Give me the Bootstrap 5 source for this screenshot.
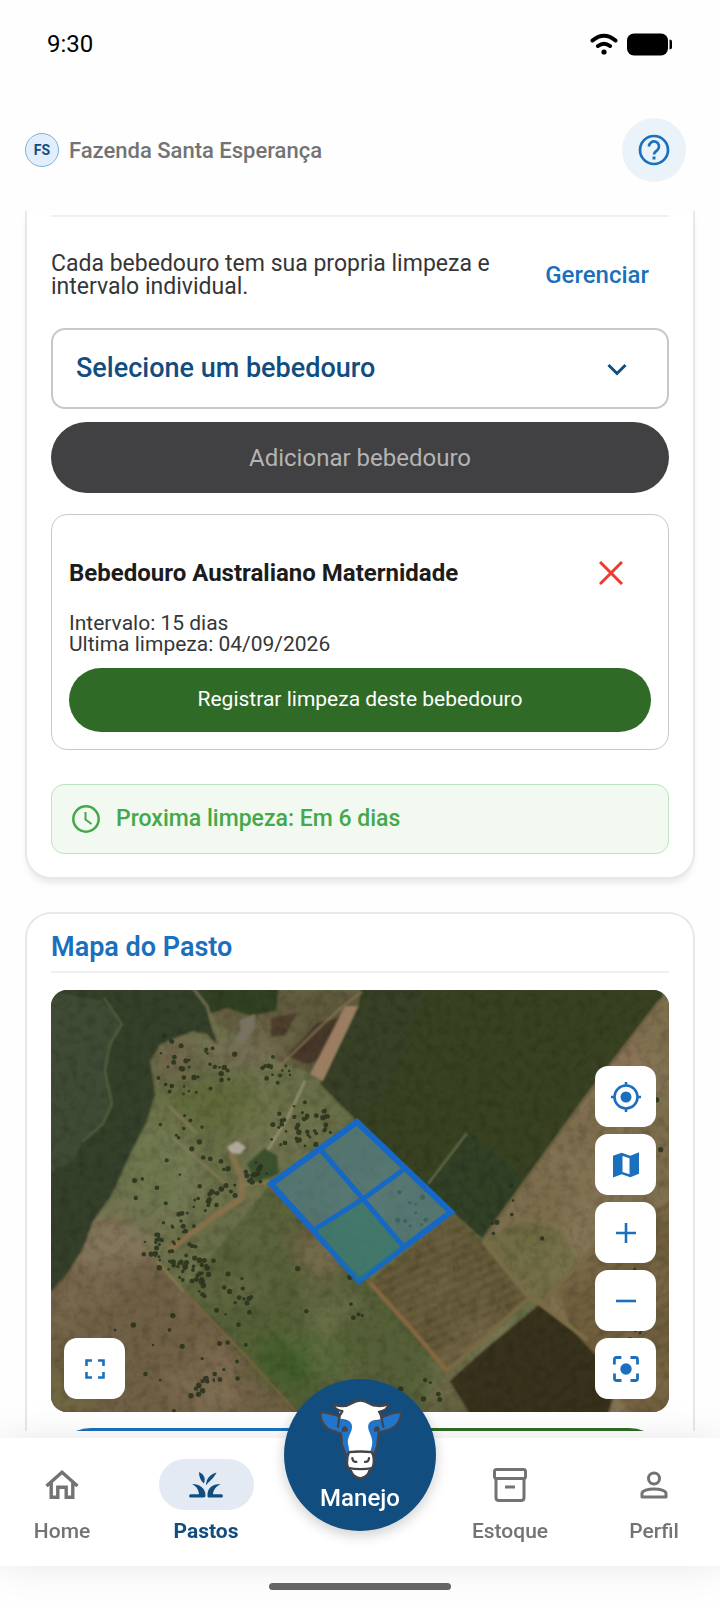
<!DOCTYPE html>
<html lang="pt-BR">
<head>
  <meta charset="UTF-8">
  <meta name="viewport" content="width=device-width, initial-scale=1.0">
  <link rel="stylesheet" href="https://cdn.jsdelivr.net/npm/bootstrap@5.3.6/dist/css/bootstrap.min.css">
  <script src="https://cdn.jsdelivr.net/npm/bootstrap@5.3.6/dist/js/bootstrap.bundle.min.js"></script>

  <title>Pastos</title>
  <style>
    :root {
      --azul: #1b70bd;
      --azul-escuro: #124d80;
      --cinza: #737373;
    }
    body {
      font-family: Roboto, "Liberation Sans", sans-serif;
      color: #363636;
      background: #fefefe;
    }
    svg { display: block; }
    .fs-21 { font-size: 21px; }
    .fs-22 { font-size: 22px; }
    .fs-23 { font-size: 23px; }
    .fs-24 { font-size: 24px; }
    .fs-27 { font-size: 27px; }
    .fw-medio { font-weight: 500; }
    .cor-azul { color: var(--azul); }

    .barra-status {
      height: 88px;
      padding: 0 47px;
      color: #000;
    }
    .topo {
      height: 123px;
      padding: 1px 34px 0 25px;
    }
    .avatar {
      width: 34px;
      height: 34px;
      border: 1px solid #7fb0dc;
      background: #e2eefb;
      color: var(--azul-escuro);
      font-size: 14px;
    }
    .btn-ajuda {
      width: 64px;
      height: 64px;
      background: #ebf3fa;
    }

    .painel {
      background: #fff;
      border: 2px solid #e8e8e8;
      border-radius: 26px;
      padding: 0 24px 23px;
    }
    .painel-rolado {
      border-top: 0;
      border-radius: 0 0 26px 26px;
      padding-top: 4px;
      box-shadow: 0 6px 8px -3px rgba(0, 0, 0, .11);
    }
    .divisor {
      margin: 0;
      border-top: 2px solid #f0f0f0;
      opacity: 1;
    }
    .aviso {
      padding: 32px 0 27px;
      line-height: 23px;
    }
    .aviso .btn { padding: 8px 20px; }

    .seletor {
      height: 81px;
      padding: 0 60px 0 23px;
      border: 2px solid #c8c8c8;
      border-radius: 14px;
      color: var(--azul-escuro);
      background-color: #fff;
      background-image: url("data:image/svg+xml,%3Csvg xmlns='http://www.w3.org/2000/svg' viewBox='0 0 20 20'%3E%3Cpath d='M1.500 6l8.500 8.500L18.500 6' fill='none' stroke='%23124d80' stroke-width='3'/%3E%3C/svg%3E");
      background-size: 20px 20px;
      background-position: right 40px center;
    }
    .btn-adicionar, .btn-adicionar:disabled {
      height: 71px;
      margin: 13px 0 21px;
      background: #414042;
      color: #b4b4b4;
      border: 0;
      opacity: 1;
    }
    .bebedouro {
      border: 1px solid #c8c8c8;
      border-radius: 16px;
      padding: 17px;
    }
    .bebedouro h3 { line-height: 28px; color: #1c1c1c; }
    .bebedouro-topo { height: 81px; }
    .bebedouro-topo .btn { padding: 14px 28px; }
    .bebedouro-dados { line-height: 21px; margin: 0 0 13px; }
    .btn-verde {
      height: 64px;
      background: #2f6b26;
      color: #fff;
    }
    .proxima {
      height: 70px;
      margin-top: 34px;
      padding: 0 20px;
      gap: 16px;
      border: 1px solid #bfe3c1;
      border-radius: 13px;
      background: #f1f9f1;
      color: #45a84a;
    }

    .painel-mapa { margin-top: 33px; }
    .painel-mapa h2 { line-height: 36px; margin: 0; padding: 15px 0 6px; font-weight: 600; }
    .mapa {
      position: relative;
      height: 422px;
      margin: 17px 0 16px;
      border-radius: 16px;
      overflow: hidden;
    }
    .mapa > svg { width: 100%; height: 100%; }
    .controles {
      position: absolute;
      right: 13px;
      bottom: 13px;
      gap: 7px;
    }
    .controle-esq { right: auto; left: 13px; }
    .controles .btn {
      width: 61px;
      height: 61px;
      border-radius: 13px;
      background: #fff;
    }
    .acao {
      height: 80px;
      border-radius: 40px;
      background: var(--azul);
    }
    .acao-verde { background: #2f6b26; }

    .rodape {
      position: relative;
      z-index: 2;
      margin-top: 7px;
    }
    .navegacao {
      display: grid;
      grid-template-columns: 31fr 41fr 36fr 39fr 33fr;
      height: 128px;
      background: #fff;
      box-shadow: 0 0 36px rgba(0, 0, 0, .09);
    }
    .navegacao a {
      display: flex;
      flex-direction: column;
      align-items: center;
      padding-top: 21px;
      gap: 9px;
      color: var(--cinza);
      text-decoration: none;
      font-weight: 500;
      line-height: 24px;
    }
    .navegacao .pilula {
      width: 95px;
      height: 51px;
      display: flex;
      align-items: center;
      justify-content: center;
      border-radius: 26px;
    }
    .navegacao .ativo { color: var(--azul-escuro); font-weight: 700; }
    .navegacao .ativo .pilula { background: #e4eaf3; }
    /* botão central, sobreposto ao mapa */
    .navegacao .btn-manejo {
      position: absolute;
      top: -59px;
      left: 50%;
      margin-left: -76px;
      width: 152px;
      height: 152px;
      padding-top: 19px;
      gap: 6px;
      border-radius: 50%;
      background: var(--azul-escuro);
      color: #fff;
      box-shadow: 0 4px 14px rgba(0, 0, 0, .2);
    }
    .gesto { height: 40px; }
    .gesto span {
      width: 182px;
      height: 7px;
      border-radius: 4px;
      background: #666;
    }
  </style>
</head>
<body>
  <div class="vh-100 d-flex flex-column overflow-hidden">
    <div class="barra-status d-flex justify-content-between align-items-center flex-shrink-0">
      <span class="fs-24">9:30</span>
      <div class="d-flex align-items-center" style="gap: 9px">
        <svg width="28" height="22" viewBox="0 0 28 22" fill="none" stroke="#000" stroke-width="4" stroke-linecap="round">
          <path d="M2.500 7.500Q14-2 25.500 7.500M8 13q6-4.500 12 0"/>
          <circle cx="14" cy="19" r="2.600" fill="#000" stroke="none"/>
        </svg>
        <svg width="46" height="23" viewBox="0 0 46 23">
          <rect width="41" height="22" y=".5" rx="7"/>
          <path d="M42.500 6.500q2.500 0 2.500 2v6q0 2-2.500 2z"/>
        </svg>
      </div>
    </div>

    <header class="topo d-flex justify-content-between align-items-center flex-shrink-0">
      <div class="d-flex align-items-center" style="gap: 10px">
        <span class="avatar rounded-circle d-flex align-items-center justify-content-center fw-bold">FS</span>
        <span class="fs-22 fw-medio" style="color: #737373">Fazenda Santa Esperança</span>
      </div>
      <button type="button" class="btn-ajuda btn rounded-circle p-0 d-flex align-items-center justify-content-center" aria-label="Ajuda">
        <svg width="32" height="32" viewBox="0 0 32 32" fill="none" stroke="#1b70bd" stroke-width="2.700">
          <circle cx="16" cy="16" r="14"/>
          <path d="M11 12.500a5 5 0 1 1 8.500 3.500c-1.800 1.700-3.500 2.300-3.500 4.500"/>
          <path d="M16 22.500v3" stroke-width="3"/>
        </svg>
      </button>
    </header>

    <main class="flex-grow-1 overflow-hidden" style="padding: 0 25px">
      <section class="painel painel-rolado">
        <hr class="divisor">
        <div class="aviso d-flex align-items-center justify-content-between">
          <p class="fs-23 mb-0">Cada bebedouro tem sua propria limpeza e<br>intervalo individual.</p>
          <button type="button" class="btn border-0 fs-24 fw-medio cor-azul">Gerenciar</button>
        </div>
        <select class="seletor form-select fs-27 fw-medio" aria-label="Selecione um bebedouro">
          <option>Selecione um bebedouro</option>
        </select>
        <button type="button" class="btn-adicionar btn w-100 rounded-pill fs-24" disabled>Adicionar bebedouro</button>

        <div class="bebedouro">
          <div class="bebedouro-topo d-flex align-items-center justify-content-between">
            <h3 class="fs-24 fw-bold mb-0">Bebedouro Australiano Maternidade</h3>
            <button type="button" class="btn border-0" aria-label="Remover bebedouro">
              <svg width="24" height="24" viewBox="0 0 24 24" stroke="#f03a2e" stroke-width="3">
                <path d="M1 1l22 22M23 1L1 23"/>
              </svg>
            </button>
          </div>
          <p class="bebedouro-dados fs-21">Intervalo: 15 dias<br>Ultima limpeza: 04/09/2026</p>
          <button type="button" class="btn-verde btn border-0 w-100 rounded-pill fs-21">Registrar limpeza deste bebedouro</button>
        </div>

        <div class="proxima d-flex align-items-center fs-23 fw-medio">
          <svg width="28" height="28" viewBox="0 0 28 28" fill="none" stroke="#45a84a" stroke-width="2.500">
            <circle cx="14" cy="14" r="12.700"/>
            <path d="M13.500 7v7.500l6 4.500" stroke-width="2"/>
          </svg>
          <span>Proxima limpeza: Em 6 dias</span>
        </div>
      </section>

      <section class="painel painel-mapa">
        <h2 class="fs-27 cor-azul">Mapa do Pasto</h2>
        <hr class="divisor">
        <div class="mapa">
          <svg viewBox="0 0 618 422" preserveAspectRatio="xMidYMid slice">
            <defs>
              <filter id="relevo" x="0" y="0" width="100%" height="100%">
                <feTurbulence type="fractalNoise" baseFrequency=".11" numOctaves="3" seed="4"/>
                <feColorMatrix values="0 0 0 0 0  0 0 0 0 0  0 0 0 0 0  1.500 0 0 0 -.62"/>
              </filter>
              <filter id="manchas" x="0" y="0" width="100%" height="100%">
                <feTurbulence type="fractalNoise" baseFrequency=".016" numOctaves="3" seed="9"/>
                <feColorMatrix values="0 0 0 0 .5  0 0 0 0 .38  0 0 0 0 .25  0 1.800 0 0 -.74"/>
              </filter>
              <filter id="suave"><feGaussianBlur stdDeviation="1"/></filter>
              <filter id="copas"><feGaussianBlur stdDeviation=".7"/></filter>
              <filter id="difuso" x="-50%" y="-50%" width="200%" height="200%"><feGaussianBlur stdDeviation="11"/></filter>
              <pattern id="sulcos" width="9" height="9" patternUnits="userSpaceOnUse" patternTransform="rotate(-24)">
                <path d="M0 2h9" stroke="#7a6a43" stroke-width="1.500" opacity=".3"/>
                <path d="M0 6h9" stroke="#463e25" stroke-width="1" opacity=".35"/>
              </pattern>
            </defs>
            <rect width="618" height="422" fill="#686e47"/>
            <g filter="url(#suave)">
              <!-- pastagens -->
              <path fill="#5f5a3e" d="M150 0h165l-10 20-40 65-35-12-65-40z"/>
              <path fill="#706045" d="M-5 304l47-73 24-3 40 43 26 30 116 125H-5z"/>
              <path fill="#566037" d="M132 301l87-106 100 96 77 90 25 45H246z"/>
              <path fill="#7c6d4d" d="M610-5h15v435h-70L489 314l-57-65 44-61 63-87z"/>
              <path fill="#6e6a43" d="M432 251l40-20 40 10 15 33-38 38z"/>
              <path fill="#635938" d="M319 291l82-68 31 28 46 58-82 72z"/>
              <path fill="url(#sulcos)" d="M319 291l82-68 31 28 46 58-82 72z"/>
              <path fill="#705f3e" d="M506 294l36-36 80-50v220h-40l-60-80z"/>
              <path fill="url(#sulcos)" d="M506 294l36-36 80-50v160h-60z"/>
              <path fill="#60603c" d="M396 381l20-12 20 55h-70z"/>
            </g>
            <g filter="url(#difuso)">
              <ellipse cx="165" cy="115" rx="50" ry="26" fill="#626b3b"/>
              <ellipse cx="109" cy="178" rx="36" ry="45" fill="#6e784f"/>
              <ellipse cx="122" cy="66" rx="20" ry="26" fill="#6e6448"/>
              <ellipse cx="190" cy="62" rx="36" ry="14" fill="#736b53"/>
              <ellipse cx="270" cy="255" rx="30" ry="36" fill="#68603f"/>
              <ellipse cx="250" cy="370" rx="46" ry="28" fill="#435d2c"/>
              <ellipse cx="60" cy="255" rx="45" ry="25" fill="#82765c"/>
              <ellipse cx="15" cy="400" rx="30" ry="30" fill="#605a33"/>
              <ellipse cx="573" cy="90" rx="22" ry="45" fill="#896f53"/>
            </g>
            <rect width="618" height="422" filter="url(#manchas)" opacity=".25"/>
            <g filter="url(#suave)">
              <!-- matas -->
              <path fill="#34402a" d="M-5-5h165l-2 30 8 29-10-10-14-3-33 13-10 17 5 33-8 27-17 33-18 40-19 27-10 27-16 26-21 22z"/>
              <path fill="#414b36" d="M-5 1l57 10 19 23-12 20-5 27 7 33-9 20-20 17-10 20-27 14z"/>
              <path fill="#314024" d="M152-5h76l-3 25-25 6-24-8-20 6z"/>
              <path fill="#46392a" d="M236 66l30-33 24-6-18 42-16 5z"/>
              <path fill="#50402f" d="M220 28l26-5-12 22-14 2z"/>
              <path fill="#374324" d="M311-5h299l2 11-73 95-63 87-44 61-31-28-95-90-37-37 38-76z"/>
              <path fill="#303f25" d="M416 141l56 47-40 61-31-28-24-27z"/>
              <path fill="#3b3e27" d="M315 0h60l-40 110-40 10-25-26 38-78z" opacity=".7"/>
              <path fill="#37321f" d="M489 314l33 27 45 48-10 35H419l-20-33 33-30z"/>
            </g>
            <rect width="618" height="422" filter="url(#relevo)" opacity=".22"/>
            <!-- estradas e divisas -->
            <g fill="none" filter="url(#suave)">
              <path fill="#9b7e62" d="M294 16h13l-35 75-13-7z"/>
              <path stroke="#83734f" stroke-width="2" d="M311 2l-19 14-22 20-31 30-14 14"/>
              <path stroke="#a1977a" stroke-width="2" d="M254 91l-18 38-20 32"/>
              <path stroke="#7f7d5c" stroke-width="1.500" d="M377 194l39-51"/>
              <path stroke="#566341" stroke-width="2" d="M53 8l18 26-12 20-5 27 7 33-9 20-20 17"/>
              <path stroke="#78654a" stroke-width="2" d="M609 10l-70 91-63 87-44 61"/>
              <path stroke="#7c6c47" stroke-width="4" d="M432 251l46 57 11 6 48 36"/>
              <path stroke="#796a45" stroke-width="4" d="M478 308l-82 73M495 308l47-48"/>
              <path stroke="#8a6842" stroke-width="4" d="M319 293l40 44 37 44"/>
              <path stroke="#846241" stroke-width="2" d="M219 197l100 96M132 301l58 60 56 62"/>
              <path stroke="#877b56" stroke-width="2" d="M106 271l26 30M122 148l55 48M118 116l28 28"/>
              <path stroke="#8d724c" stroke-width="6" opacity=".8" d="M180 164l10 22 1 22-30 20-45 34"/>
              <path stroke="#8b7a50" stroke-width="2" d="M190 196l29-4"/>
              <path fill="#b1a798" d="M176 157l10-6 9 6-6 7-9-1z"/>
              <path fill="#77725e" d="M188 30l16-6v14l-13 18-8-6 7-10z"/>
              <path fill="#314924" opacity=".8" d="M196 174l18-16 12 8 2 18-24 8z"/>
              <path stroke="#6f6b4c" stroke-width="3" d="M142-2l14 18 8 26"/>
            </g>
            <g id="arvores" fill="#27301c" opacity=".85" filter="url(#copas)"></g>
            <!-- piquetes -->
            <g stroke="#1768c5" stroke-width="6" fill="none">
              <path fill="#4a7a86" fill-opacity=".65" d="M306 132l94 90-92 69-88-97z"/>
              <path fill="#2f7a66" fill-opacity=".5" stroke="none" d="M312 209l40 47-44 35-44-52z"/>
              <path stroke-width="5" d="M269 159l43 50 40 47M264 239l48-30 40-29"/>
            </g>
          </svg>

          <div class="controles d-flex flex-column">
            <button type="button" class="btn border-0 p-0 d-flex align-items-center justify-content-center" aria-label="Minha localização">
              <svg width="32" height="32" viewBox="0 0 32 32" fill="none" stroke="#1b70bd" stroke-width="2.600">
                <circle cx="16" cy="16" r="11.500"/>
                <circle cx="16" cy="16" r="5.500" fill="#1b70bd" stroke="none"/>
                <path d="M16 1v4M16 27v4M1 16h4M27 16h4"/>
              </svg>
            </button>
            <button type="button" class="btn border-0 p-0 d-flex align-items-center justify-content-center" aria-label="Tipo de mapa">
              <svg width="26" height="26" viewBox="0 0 26 26" fill="#1b70bd">
                <path fill-rule="evenodd" d="M0 3.800L8.700.7l8.600 3L26 .3v21.500l-8.700 3.500-8.600-3L0 25.500zM9.500 4v16l7 2.300V6.200z"/>
              </svg>
            </button>
            <button type="button" class="btn border-0 p-0 d-flex align-items-center justify-content-center" aria-label="Aproximar">
              <svg width="20" height="20" viewBox="0 0 20 20" stroke="#1b70bd" stroke-width="2.600"><path d="M10 0v20M0 10h20"/></svg>
            </button>
            <button type="button" class="btn border-0 p-0 d-flex align-items-center justify-content-center" aria-label="Afastar">
              <svg width="20" height="20" viewBox="0 0 20 20" stroke="#1b70bd" stroke-width="2.600"><path d="M0 10h20"/></svg>
            </button>
            <button type="button" class="btn border-0 p-0 d-flex align-items-center justify-content-center" aria-label="Centralizar pasto">
              <svg width="26" height="26" viewBox="0 0 26 26" fill="none" stroke="#1b70bd" stroke-width="2.800">
                <path d="M1.400 8.500v-5q0-2 2-2h5M17.500 1.500h5q2 0 2 2v5M24.500 17.500v5q0 2-2 2h-5M8.500 24.500h-5q-2 0-2-2v-5"/>
                <circle cx="13" cy="13" r="5.700" fill="#1b70bd" stroke="none"/>
              </svg>
            </button>
          </div>
          <div class="controles controle-esq">
            <button type="button" class="btn border-0 p-0 d-flex align-items-center justify-content-center" aria-label="Tela cheia">
              <svg width="20" height="20" viewBox="0 0 20 20" fill="none" stroke="#1b70bd" stroke-width="2.600">
                <path d="M1.500 7V1.500H7M13 1.500h5.500V7M18.500 13v5.500H13M7 18.500H1.500V13"/>
              </svg>
            </button>
          </div>
        </div>
        <div class="d-flex gap-2">
          <button type="button" class="acao btn border-0 flex-fill" aria-label="Editar mapa"></button>
          <button type="button" class="acao acao-verde btn border-0 flex-fill" aria-label="Novo piquete"></button>
        </div>
      </section>
    </main>

    <footer class="rodape flex-shrink-0">
      <nav class="navegacao fs-21">
        <a href="#home">
          <span class="pilula">
            <svg width="34" height="30" viewBox="0 0 34 30" fill="none" stroke="#737373" stroke-width="3.400">
              <path d="M1.500 16L17 2.300 32.500 16M6.200 13v14.300h6.600v-10h8.400v10h6.600V13"/>
            </svg>
          </span>
          Home
        </a>
        <a href="#pastos" class="ativo" aria-current="page">
          <span class="pilula">
            <svg width="34" height="27" viewBox="0 0 34 27" fill="#124d80">
              <path d="M10 1c5 2.500 7 6 5 11.500C11.500 9.500 10 6 10 1zM27.500 1.500c-6 1.500-10.500 6-10.500 13 3.500-5 7.500-6.500 10.500-13z"/>
              <path d="M3 13c8 0 13.500 4.500 13.500 11.500 0 1.200-.6 2-2 2H1.700a1.600 1.600 0 0 1 0-3.200H10C9.500 18.500 7.500 15.500 3 13z"/>
              <path d="M31.500 13c-8 0-13.500 4-13 12 0 1 .6 1.500 1.500 1.500h12.300a1.600 1.600 0 0 0 0-3.200H24c.3-4.300 2.500-7.300 7.500-10.300z"/>
            </svg>
          </span>
          Pastos
        </a>
        <span></span>
        <a href="#estoque">
          <span class="pilula">
            <svg width="34" height="34" viewBox="0 0 34 34" fill="none" stroke="#737373" stroke-width="3">
              <rect x="1.500" y="1.500" width="31" height="9" rx="2"/>
              <path d="M3 10.500v19q0 3 3 3h22q3 0 3-3v-19M12 19h10"/>
            </svg>
          </span>
          Estoque
        </a>
        <a href="#perfil">
          <span class="pilula">
            <svg width="28" height="28" viewBox="0 0 28 28" fill="none" stroke="#737373" stroke-width="3">
              <circle cx="14" cy="7.500" r="5.500"/>
              <path d="M2 26v-3.500c0-6 24-6 24 0V26z" stroke-linejoin="round"/>
            </svg>
          </span>
          Perfil
        </a>
        <a href="#manejo" class="btn-manejo fs-24">
          <svg width="85" height="82" viewBox="145 85 255 245" stroke="#43434a" stroke-width="7" stroke-linejoin="round" stroke-linecap="round">
            <path fill="#2175ca" d="M208 139c-20-6-42-15-56-11 0 30 17 52 45 57l17 7 3 35 15 35h78l13-34 4-38 18-7c28-4 49-24 49-55-16-4-36 5-55 13l-20 8h-90z"/>
            <path fill="#fff" stroke="none" d="M209 145l20 5c18 4 22 20 15 36-7 14-12 26-8 40l4 24h61l6-24c3-16-3-26-7-38-8-19-6-34 14-37l19-3V122H209z"/>
            <path fill="#fff" stroke="none" d="M206 144c3-8 9-14 12-20-13-2-25-7-25-19 20 5 39 5 52-4 18-12 36-12 54 0 14 9 37 10 57 2-1 13-13 21-28 23 6 7 9 11 9 18z"/>
            <path fill="none" d="M208 142c3-8 7-12 10-18-13-2-25-7-25-19 20 5 39 5 52-4 18-12 36-12 54 0 14 9 37 10 57 2-1 13-13 21-28 23 6 7 9 11 9 18"/>
            <path fill="none" d="M210 134l-5 36M333 134l8 36"/>
            <path fill="#43434a" stroke="none" d="M216 186c0-12 4-17 9-17 8 0 11 10 8 16zM331 186c0-12-4-17-9-17-8 0-11 10-8 16z"/>
            <path fill="#fff" d="M238 247q34-4 68 0 8 13 6 33-2 17-13 23-4 18-27 23-23-5-28-23-11-6-12-23-1-20 6-33z"/>
            <path fill="none" d="M248 265q1 12 12 11M298 265q-1 12-12 11M234 294q38 8 77 0"/>
          </svg>
          Manejo
        </a>
      </nav>
      <div class="gesto d-flex align-items-center justify-content-center"><span></span></div>
    </footer>
  </div>

  <script>
    // grupos de árvores: [x, y, raio x, raio y, inclinação, quantidade]
    const grupos = [
      [125, 75, 22, 34, -0.4, 22],
      [160, 80, 30, 26, 0, 16],
      [226, 82, 20, 16, 0, 16],
      [250, 136, 34, 24, -0.3, 42],
      [128, 180, 50, 56, 0, 26],
      [150, 220, 48, 12, -0.6, 26],
      [128, 268, 40, 20, 0.4, 60],
      [175, 308, 30, 28, 0.8, 22],
      [204, 182, 12, 12, 0, 16],
      [120, 365, 80, 50, 0, 14],
      [150, 400, 36, 6, -0.7, 14],
      [280, 300, 40, 60, 0, 7],
      [590, 230, 24, 160, 0, 18],
      [490, 230, 50, 60, 0, 7],
      [370, 400, 28, 16, 0, 6],
      [355, 215, 34, 24, 0, 12]
    ];

    let semente = 17;
    function aleatorio() {
      semente = (semente * 16807) % 2147483647;
      return semente / 2147483647;
    }

    let arvores = '';
    grupos.forEach(([x, y, rx, ry, inc, total]) => {
      for (let i = 0; i < total; i++) {
        const ang = aleatorio() * Math.PI * 2;
        const dist = Math.sqrt(aleatorio());
        const dx = Math.cos(ang) * dist * rx;
        const dy = Math.sin(ang) * dist * ry;
        const cx = x + dx * Math.cos(inc) - dy * Math.sin(inc);
        const cy = y + dx * Math.sin(inc) + dy * Math.cos(inc);
        arvores += `<circle cx="${cx.toFixed(1)}" cy="${cy.toFixed(1)}" r="${(1.2 + aleatorio() * 1.6).toFixed(1)}"/>`;
      }
    });
    document.getElementById('arvores').innerHTML = arvores;
  </script>
</body>
</html>
